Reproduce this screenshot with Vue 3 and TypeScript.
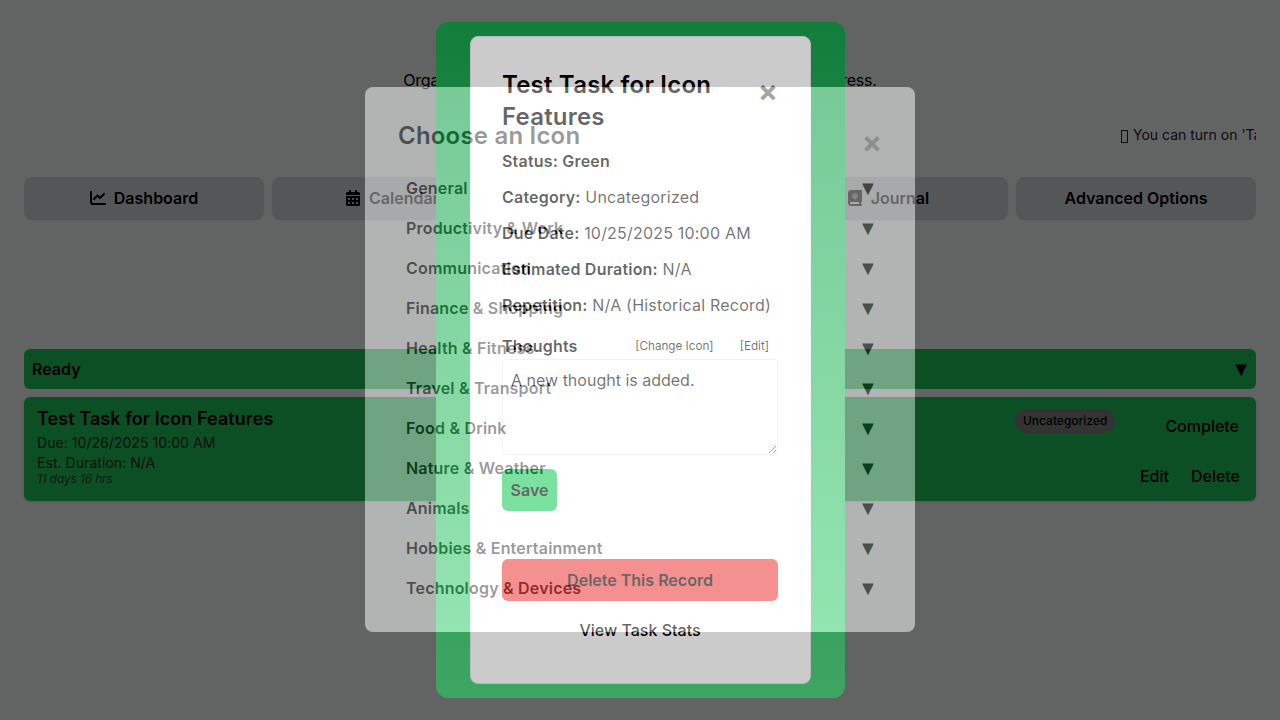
<template>
  <div class="page">
    <p class="tagline">Organize your tasks, manage your time and track your progress.</p>
    <div class="tip-strip">
      <span class="tip-text"><i class="tofu"></i>You can turn on 'Task Reminders' in Advanced Options</span>
    </div>

    <nav class="main-nav">
      <button v-for="item in navItems" :key="item.label" class="nav-btn">
        <svg v-if="item.icon === 'chart'" class="nav-icon" viewBox="0 0 512 512">
          <path d="M64 64c0-17.7-14.3-32-32-32S0 46.3 0 64V400c0 44.2 35.8 80 80 80H480c17.7 0 32-14.3 32-32s-14.3-32-32-32H80c-8.8 0-16-7.2-16-16V64zm406.6 86.6c12.5-12.5 12.5-32.8 0-45.3s-32.8-12.5-45.3 0L320 210.7l-57.4-57.4c-12.5-12.5-32.8-12.5-45.3 0l-112 112c-12.5 12.5-12.5 32.8 0 45.3s32.8 12.5 45.3 0L240 221.3l57.4 57.4c12.5 12.5 32.8 12.5 45.3 0l128-128z" />
        </svg>
        <svg v-else-if="item.icon === 'calendar'" class="nav-icon" viewBox="0 0 448 512">
          <path d="M128 0c17.7 0 32 14.3 32 32V64H288V32c0-17.7 14.3-32 32-32s32 14.3 32 32V64h48c26.5 0 48 21.5 48 48v48H0V112C0 85.5 21.5 64 48 64H96V32c0-17.7 14.3-32 32-32zM0 192H448V464c0 26.5-21.5 48-48 48H48c-26.5 0-48-21.5-48-48V192zm64 80v32c0 8.8 7.2 16 16 16h32c8.8 0 16-7.2 16-16V272c0-8.8-7.2-16-16-16H80c-8.8 0-16 7.2-16 16zm128 0v32c0 8.8 7.2 16 16 16h32c8.8 0 16-7.2 16-16V272c0-8.8-7.2-16-16-16H208c-8.8 0-16 7.2-16 16zm144-16c-8.8 0-16 7.2-16 16v32c0 8.8 7.2 16 16 16h32c8.8 0 16-7.2 16-16V272c0-8.8-7.2-16-16-16H336zM64 400v32c0 8.8 7.2 16 16 16h32c8.8 0 16-7.2 16-16V400c0-8.8-7.2-16-16-16H80c-8.8 0-16 7.2-16 16zm144-16c-8.8 0-16 7.2-16 16v32c0 8.8 7.2 16 16 16h32c8.8 0 16-7.2 16-16V400c0-8.8-7.2-16-16-16H208zm112 16v32c0 8.8 7.2 16 16 16h32c8.8 0 16-7.2 16-16V400c0-8.8-7.2-16-16-16H336c-8.8 0-16 7.2-16 16z" />
        </svg>
        <svg v-else-if="item.icon === 'journal'" class="nav-icon" viewBox="0 0 448 512">
          <path d="M0 96C0 43 43 0 96 0H416c17.7 0 32 14.3 32 32V352c0 17.7-14.3 32-32 32v64c17.7 0 32 14.3 32 32s-14.3 32-32 32H96c-53 0-96-43-96-96V96zM64 416c0 17.7 14.3 32 32 32H352V384H96c-17.7 0-32 14.3-32 32z" />
          <path d="M160 130v70c0 36 28 62 64 62s64-26 64-62v-70M224 100v160" class="journal-mark" />
        </svg>
        {{ item.label }}
      </button>
    </nav>

    <section class="task-section">
      <div class="section-bar">
        <span>Ready</span>
        <span class="arrow">▼</span>
      </div>
      <div class="task-card">
        <div class="task-info">
          <h3>Test Task for Icon Features</h3>
          <p>Due: 10/26/2025 10:00 AM</p>
          <p>Est. Duration: N/A</p>
          <p class="task-left">11 days 16 hrs</p>
        </div>
        <div class="task-actions">
          <div class="action-row">
            <span class="pill">Uncategorized</span>
            <button class="link-btn">Complete</button>
          </div>
          <div class="action-row edit-row">
            <button class="link-btn">Edit</button>
            <button class="link-btn">Delete</button>
          </div>
        </div>
      </div>
    </section>
  </div>

  <div class="dim"></div>

  <div class="layer">
    <div class="status-panel">
      <div class="detail-modal">
        <span class="close">×</span>
        <h2>Test Task for Icon Features</h2>
        <p class="field status-field">Status: Green</p>
        <p v-for="f in fields" :key="f.label" class="field"><b>{{ f.label }}</b> {{ f.value }}</p>
        <div class="thoughts-head">
          <b>Thoughts</b>
          <span class="mini-links">
            <a>[Change Icon]</a>
            <a>[Edit]</a>
          </span>
        </div>
        <textarea class="thought-box" :value="thought"></textarea>
        <button class="save-btn">Save</button>
        <button class="delete-btn">Delete This Record</button>
        <a class="stats-link">View Task Stats</a>
      </div>
    </div>
  </div>

  <div class="layer">
    <div class="picker-glass">
      <div class="picker-modal">
        <span class="close picker-close">×</span>
        <h2>Choose an Icon</h2>
        <div v-for="c in categories" :key="c" class="cat-row">
          <span>{{ c }}</span>
          <span class="arrow">▼</span>
        </div>
      </div>
    </div>
  </div>
</template>

<script setup lang="ts">
interface NavItem {
  label: string
  icon?: string
}

const navItems: NavItem[] = [
  { label: 'Dashboard', icon: 'chart' },
  { label: 'Calendar', icon: 'calendar' },
  { label: 'Tasks' },
  { label: 'Journal', icon: 'journal' },
  { label: 'Advanced Options' }
]

const fields = [
  { label: 'Category:', value: 'Uncategorized' },
  { label: 'Due Date:', value: '10/25/2025 10:00 AM' },
  { label: 'Estimated Duration:', value: 'N/A' },
  { label: 'Repetition:', value: 'N/A (Historical Record)' }
]

const thought = 'A new thought is added.'

const categories = [
  'General',
  'Productivity & Work',
  'Communication',
  'Finance & Shopping',
  'Health & Fitness',
  'Travel & Transport',
  'Food & Drink',
  'Nature & Weather',
  'Animals',
  'Hobbies & Entertainment',
  'Technology & Devices'
]
</script>

<style>
html,
body {
  margin: 0;
  background: #f5faf7;
}
</style>

<style scoped>
* {
  box-sizing: border-box;
}

.page {
  height: 720px;
  padding: 68px 24px 0;
  overflow: hidden;
  background: #f5faf7;
  font-family: Inter, 'Liberation Sans', sans-serif;
  font-size: 16px;
  line-height: 24px;
  color: #000;
}

.tagline {
  margin: 0;
  text-align: center;
  letter-spacing: -0.19px;
}

.tip-strip {
  margin-top: 31px;
  overflow: hidden;
  font-size: 14px;
  white-space: nowrap;
  color: #222;
}

.tip-text {
  display: inline-block;
  margin-left: 1097px;
}

.tofu {
  display: inline-block;
  width: 7px;
  height: 13px;
  margin-right: 5px;
  border: 1px solid #222;
  vertical-align: -3px;
}

.main-nav {
  display: grid;
  grid-template-columns: repeat(5, 1fr);
  gap: 8px;
  margin-top: 30px;
}

.nav-btn {
  display: flex;
  align-items: center;
  justify-content: center;
  gap: 8px;
  height: 43px;
  padding-bottom: 2px;
  border: none;
  border-radius: 8px;
  background: #d4d7dc;
  font: 600 16px Inter, 'Liberation Sans', sans-serif;
  color: #000;
  box-shadow: 0 1px 2px rgba(0, 0, 0, 0.06);
}

.nav-icon {
  width: 16px;
  height: 16px;
  fill: #000;
}

.journal-mark {
  fill: none;
  stroke: #d4d7dc;
  stroke-width: 28;
}

.task-section {
  margin-top: 129px;
}

.section-bar {
  display: flex;
  align-items: center;
  justify-content: space-between;
  height: 40px;
  padding: 0 8px;
  border-radius: 6px;
  background: #22c55e;
  font-weight: 600;
}

.arrow {
  margin-right: -3px;
  font-family: 'Liberation Sans', sans-serif;
  font-size: 20px;
  font-weight: 400;
}

.task-card {
  display: flex;
  justify-content: space-between;
  height: 104px;
  margin-top: 8px;
  padding: 9px 17px 0 13px;
  border-radius: 6px;
  background: #22c55e;
  box-shadow: 0 1px 3px rgba(0, 0, 0, 0.15);
}

.task-info h3 {
  margin: 1px 0 2px;
  font-size: 18px;
  font-weight: 600;
  line-height: 24px;
  letter-spacing: 0.07px;
}

.task-info p {
  margin: 0;
  font-size: 14px;
  line-height: 20px;
  letter-spacing: 0.05px;
  color: rgba(0, 0, 0, 0.8);
}

.task-info .task-left {
  margin-top: -2px;
  font-size: 12px;
  font-style: italic;
  line-height: 16px;
  letter-spacing: -0.15px;
  color: rgba(0, 0, 0, 0.65);
}

.task-actions {
  display: flex;
  flex-direction: column;
  gap: 10px;
}

.action-row {
  display: flex;
  justify-content: flex-end;
  height: 40px;
  gap: 50px;
}

.edit-row {
  gap: 22px;
  margin-right: -1px;
}

.pill {
  height: 24px;
  margin-top: 3px;
  padding: 0 8px;
  border-radius: 12px;
  background: #808080;
  font-size: 12px;
  font-weight: 500;
  line-height: 24px;
}

.link-btn {
  padding: 0;
  border: none;
  background: none;
  font: 500 16px Inter, 'Liberation Sans', sans-serif;
  color: #000;
}

.dim {
  position: fixed;
  inset: 0;
  background: rgba(0, 0, 0, 0.6);
}

.layer {
  position: fixed;
  inset: 0;
  display: flex;
  align-items: center;
  justify-content: center;
  font-family: Inter, 'Liberation Sans', sans-serif;
  font-size: 16px;
  line-height: 24px;
  letter-spacing: 0.2px;
  color: #000;
}

.status-panel {
  height: 676px;
  width: 409px;
  margin-left: 1px;
  padding: 14px 34px 14px;
  border-radius: 12px;
  background: linear-gradient(#137d3c, #3ea663);
}

.detail-modal {
  position: relative;
  height: 100%;
  padding: 32px 32px 0 31px;
  border: 1px solid #b9b9b9;
  border-radius: 8px;
  background: #cbcbcb;
}

h2 {
  margin: 0;
  font-size: 24px;
  font-weight: 600;
  line-height: 32px;
}

.close {
  position: absolute;
  top: 38px;
  right: 32px;
  font-size: 30px;
  font-weight: 700;
  line-height: 32px;
  letter-spacing: 0;
  color: #525252;
}

.field {
  margin: 12px 0 0;
  color: #111;
}

.field b,
.status-field,
.thoughts-head b {
  font-weight: 600;
  color: #000;
}

.status-field {
  margin-top: 16px;
}

.thoughts-head {
  display: flex;
  justify-content: space-between;
  align-items: center;
  margin-top: 17px;
}

.mini-links {
  display: flex;
  gap: 26px;
  margin-right: 9px;
  font-size: 11.7px;
  letter-spacing: 0;
  color: #111;
}

.thought-box {
  display: block;
  width: 276px;
  height: 96px;
  margin-top: 1px;
  padding: 8px;
  border: 1px solid #b4b4b4;
  border-radius: 4px;
  background: #cbcbcb;
  font: 16px/24px Inter, 'Liberation Sans', sans-serif;
  letter-spacing: 0;
  color: #111;
}

.save-btn,
.delete-btn {
  display: block;
  height: 42px;
  border: none;
  border-radius: 6px;
  font: 600 16px Inter, 'Liberation Sans', sans-serif;
  letter-spacing: 0;
  color: #000;
}

.save-btn {
  width: 55px;
  margin-top: 14px;
  background: #1b9e4b;
}

.delete-btn {
  width: 276px;
  margin-top: 48px;
  background: #b83636;
}

.stats-link {
  display: block;
  width: 276px;
  margin-top: 17px;
  text-align: center;
  font-weight: 500;
  letter-spacing: 0;
}

.picker-glass {
  width: 550px;
  height: 545px;
  margin-top: -1px;
  border-radius: 8px;
  backdrop-filter: brightness(1.3);
}

.picker-modal {
  position: relative;
  height: 100%;
  padding: 33px 33px 0;
  border-radius: 8px;
  background: #fff;
  opacity: 0.4;
}

.picker-close {
  top: 39px;
  right: 33px;
  color: #a0a0a0;
}

.cat-row {
  display: flex;
  justify-content: space-between;
  align-items: center;
  height: 40px;
  padding: 0 8px;
  font-weight: 600;
}

.cat-row .arrow {
  margin-right: -4px;
}

.picker-modal h2 {
  margin-bottom: 16px;
}
</style>
